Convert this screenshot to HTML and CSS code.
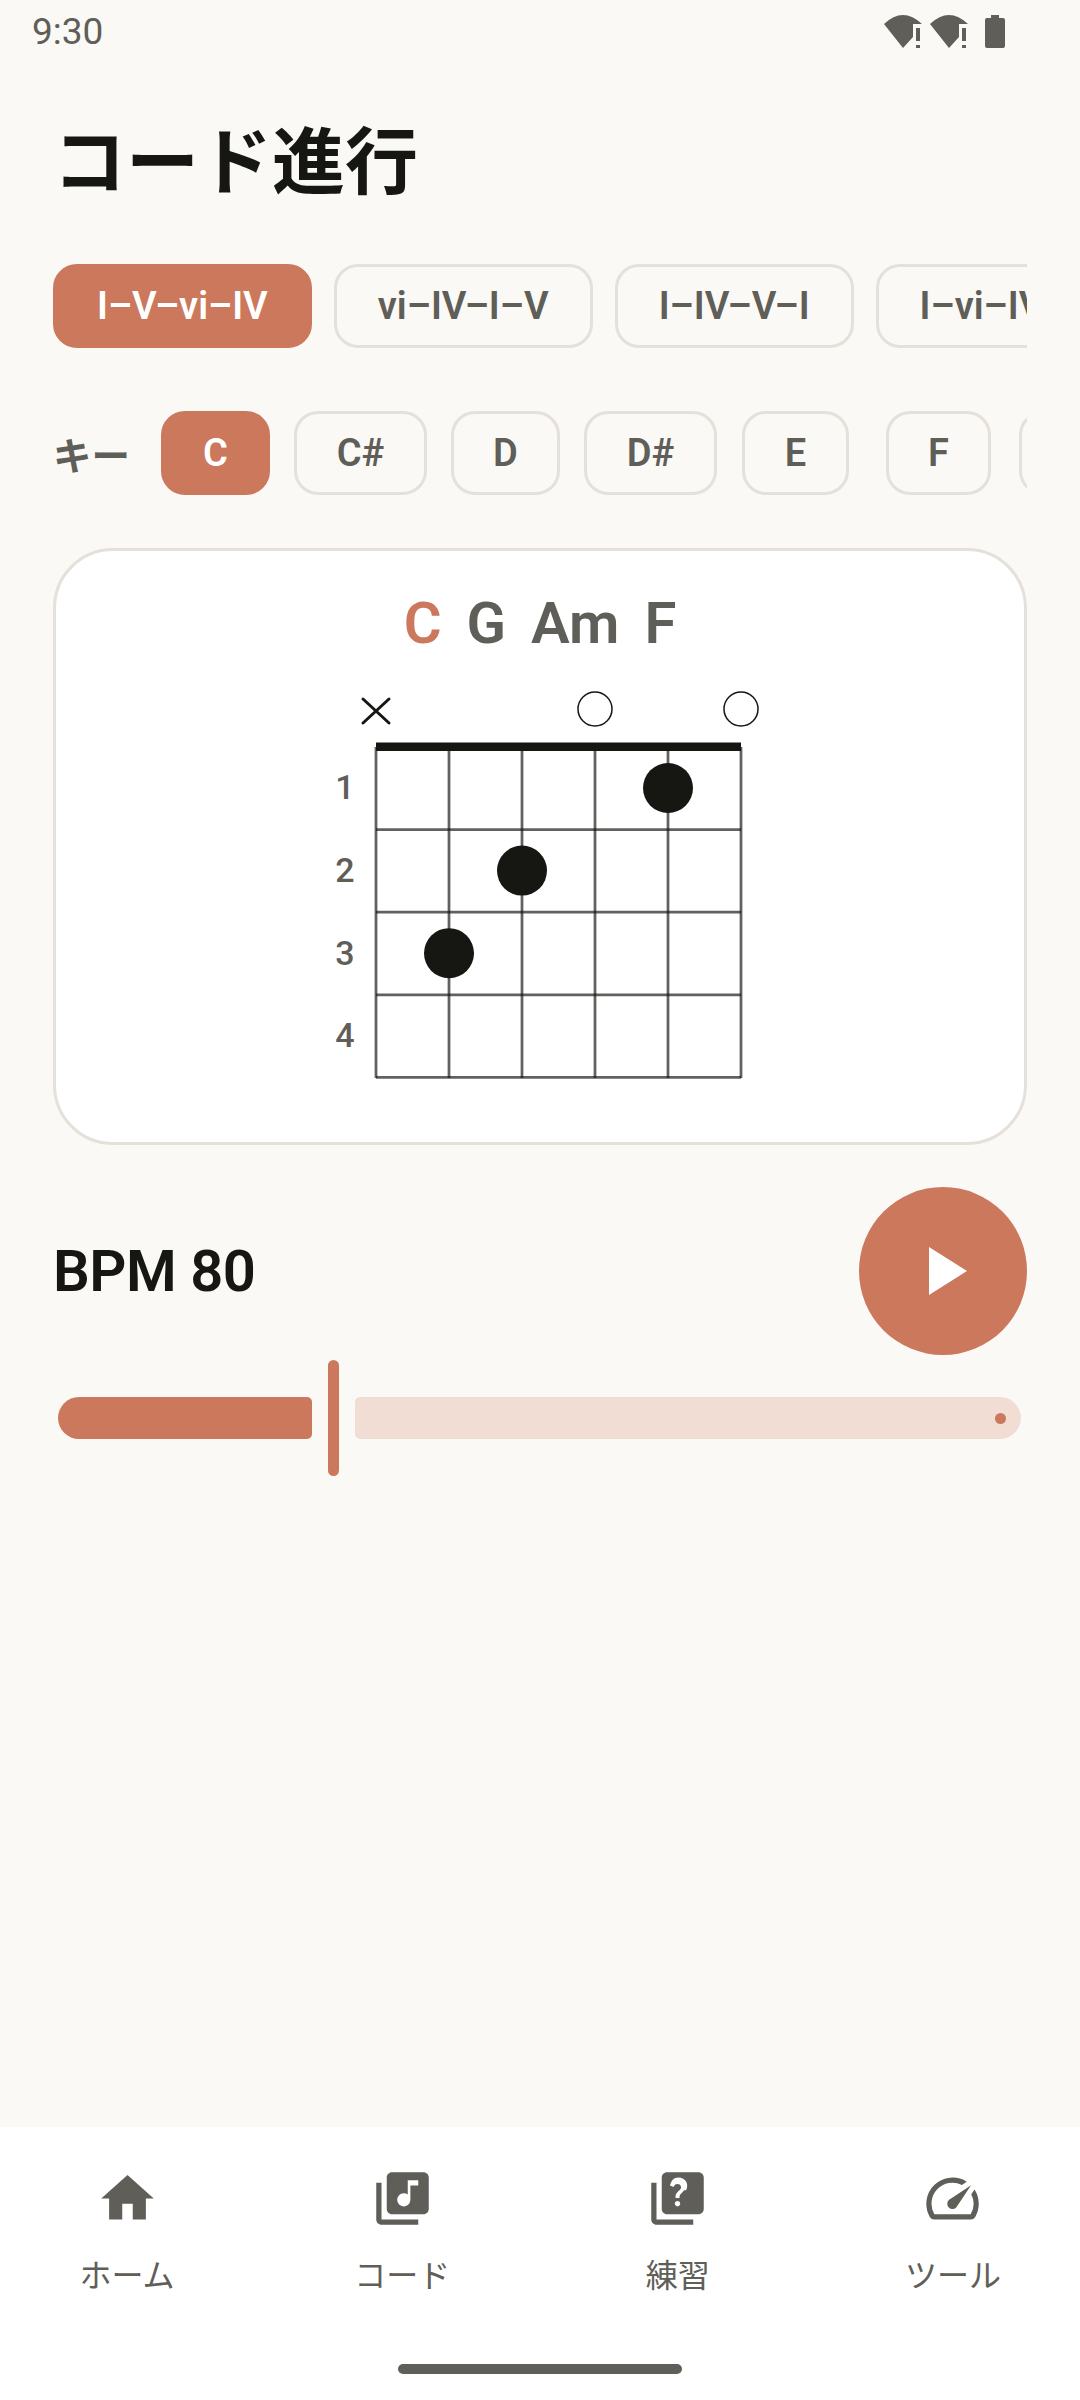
FILE: index.html
```html
<!DOCTYPE html>
<html lang="ja">

<head>
    <meta charset="UTF-8">
    <meta name="viewport" content="width=device-width, initial-scale=1.0">
    <title>コード進行</title>
    <link rel="stylesheet" href="styles.css">
</head>

<body>
    <div class="screen">
        <!-- status bar -->
        <div class="status">
            <span class="status-time">9:30</span>
            <div class="status-icons">
                <svg class="wifi" viewBox="0 0 38 33">
                    <path d="M0 9Q19 -9 38 9H29V22L19 33z" />
                    <path d="M32 13h4v13h-4zM32 30h4v3h-4z" />
                </svg>
                <svg class="wifi" viewBox="0 0 38 33">
                    <path d="M0 9Q19 -9 38 9H29V22L19 33z" />
                    <path d="M32 13h4v13h-4zM32 30h4v3h-4z" />
                </svg>
                <svg class="battery" viewBox="0 0 20 33">
                    <path d="M6 0h8v3h4q2 0 2 2v26q0 2-2 2H2q-2 0-2-2V5q0-2 2-2h4z" />
                </svg>
            </div>
        </div>

        <div class="main">
            <h1 class="title">コード進行</h1>

            <!-- progressions -->
            <div class="prog-list">
                <div class="chip active">I–V–vi–IV</div>
                <div class="chip">vi–IV–I–V</div>
                <div class="chip">I–IV–V–I</div>
                <div class="chip">I–vi–IV–V</div>
            </div>

            <!-- key -->
            <div class="key-row">
                <span class="key-label">キー</span>
                <div class="key-list">
                    <div class="key-slot"><div class="chip key active">C</div></div>
                    <div class="key-slot"><div class="chip key">C#</div></div>
                    <div class="key-slot"><div class="chip key">D</div></div>
                    <div class="key-slot"><div class="chip key">D#</div></div>
                    <div class="key-slot"><div class="chip key">E</div></div>
                    <div class="key-slot tight"><div class="chip key">F</div></div>
                    <div class="key-slot"><div class="chip key">F#</div></div>
                </div>
            </div>

            <!-- chord card -->
            <div class="card">
                <div class="chords">
                    <span class="now">C</span>
                    <span>G</span>
                    <span>Am</span>
                    <span>F</span>
                </div>
                <svg class="diagram" viewBox="0 0 440 402" width="440" height="402">
                    <path class="mute" d="M43 19L69 43M69 19L43 43" />
                    <circle class="open" cx="275" cy="29" r="17" />
                    <circle class="open" cx="421" cy="29" r="17" />
                    <path class="grid" d="M56 67V398M129 67V398M202 67V398M275 67V398M348 67V398M421 67V398" />
                    <path class="grid" d="M56 149.6H421M56 232.2H421M56 314.8H421M56 397.4H421" />
                    <rect class="nut" x="56" y="62.5" width="365" height="8.5" />
                    <circle class="dot" cx="348" cy="108" r="25" />
                    <circle class="dot" cx="202" cy="190.6" r="25" />
                    <circle class="dot" cx="129" cy="273.2" r="25" />
                    <text class="fret" x="25" y="119">1</text>
                    <text class="fret" x="25" y="202">2</text>
                    <text class="fret" x="25" y="284.6">3</text>
                    <text class="fret" x="25" y="367">4</text>
                </svg>
            </div>

            <!-- tempo -->
            <div class="bpm-row">
                <span class="bpm">BPM 80</span>
                <div class="play">
                    <svg viewBox="0 0 38 48" width="38" height="48">
                        <path d="M0 0L38 24L0 48z" />
                    </svg>
                </div>
            </div>
            <div class="slider">
                <div class="track-on"></div>
                <div class="handle"></div>
                <div class="track-off"><span class="stop"></span></div>
            </div>
        </div>

        <!-- bottom nav -->
        <div class="nav">
            <div class="nav-items">
                <div class="nav-item">
                    <svg viewBox="0 0 24 24"><path d="M10 20v-6h4v6h5v-8h3L12 3 2 12h3v8z" /></svg>
                    <span>ホーム</span>
                </div>
                <div class="nav-item">
                    <svg viewBox="0 0 24 24"><path d="M20 2H8c-1.1 0-2 .9-2 2v12c0 1.1.9 2 2 2h12c1.1 0 2-.9 2-2V4c0-1.1-.9-2-2-2zm-2 5h-3v5.5c0 1.38-1.12 2.5-2.5 2.5S10 13.88 10 12.5s1.12-2.5 2.5-2.5c.57 0 1.08.19 1.5.51V5h4v2zM4 6H2v14c0 1.1.9 2 2 2h14v-2H4V6z" /></svg>
                    <span>コード</span>
                </div>
                <div class="nav-item">
                    <svg viewBox="0 0 24 24"><path d="M4 6H2v14c0 1.1.9 2 2 2h14v-2H4V6zm16-4H8c-1.1 0-2 .9-2 2v12c0 1.1.9 2 2 2h12c1.1 0 2-.9 2-2V4c0-1.1-.9-2-2-2zm-7.99 13c-.59 0-1.05-.47-1.05-1.05 0-.59.47-1.04 1.05-1.04.59 0 1.04.45 1.04 1.04 0 .58-.45 1.05-1.04 1.05zm2.5-6.17c-.63.93-1.23 1.21-1.56 1.81-.13.24-.18.4-.18 1.18h-1.52c0-.41-.06-1.08.26-1.65.41-.73 1.18-1.16 1.63-1.8.48-.68.21-1.94-1.14-1.94-.88 0-1.32.67-1.5 1.23l-1.37-.57C9.51 5.33 10.59 4 12.32 4c1.45 0 2.44.66 2.94 1.49.43.7.68 2.05 0 3.34z" /></svg>
                    <span>練習</span>
                </div>
                <div class="nav-item">
                    <svg viewBox="0 0 24 24"><path d="M20.38 8.57l-1.23 1.85a8 8 0 0 1-.22 7.58H5.07A8 8 0 0 1 15.58 6.85l1.85-1.23A10 10 0 0 0 3.35 19a2 2 0 0 0 1.72 1h13.85a2 2 0 0 0 1.74-1 10 10 0 0 0-.27-10.44zm-9.79 6.84a2 2 0 0 0 2.83 0l5.66-8.49-8.49 5.66a2 2 0 0 0 0 2.83z" /></svg>
                    <span>ツール</span>
                </div>
            </div>
            <div class="pill"></div>
        </div>
    </div>
</body>

</html>
```

FILE: styles.css
```css
* {
    margin: 0;
    padding: 0;
    box-sizing: border-box;
}

body {
    background-color: #fbf9f5;
    font-family: Roboto, "Noto Sans CJK JP", sans-serif;
    color: #5f5e58;
}

.screen {
    width: 1080px;
    height: 2400px;
    display: flex;
    flex-direction: column;
    overflow: hidden;
}

/* status bar */
.status {
    height: 60px;
    flex: none;
    display: flex;
    justify-content: space-between;
    padding: 15px 75px 0 32px;
}

.status-time {
    font-size: 37px;
    line-height: 33px;
}

.status-icons {
    display: flex;
    gap: 8px;
}

.status-icons svg {
    height: 33px;
    fill: #5f5e58;
}

.wifi {
    width: 38px;
}

.battery {
    width: 20px;
    margin-left: 9px;
}

/* main column */
.main {
    flex: 1;
    padding: 0 53px;
}

.title {
    font-size: 73px;
    font-weight: 700;
    line-height: 100px;
    color: #161613;
    margin: 53px 0 0 0;
}

.prog-list {
    display: flex;
    gap: 22px;
    margin-top: 51px;
    overflow: hidden;
}

.chip {
    flex: none;
    height: 84px;
    padding: 0 41px;
    border: 3px solid #e5e0da;
    border-radius: 24px;
    display: flex;
    align-items: center;
    font-size: 38px;
    font-weight: 600;
}

.chip.active {
    background-color: #cb785c;
    border-color: #cb785c;
    color: #ffffff;
}

.key-row {
    display: flex;
    align-items: center;
    margin-top: 63px;
}

.key-label {
    flex: none;
    width: 90px;
    font-size: 38.5px;
    font-weight: 700;
}

.key-list {
    display: flex;
    overflow: hidden;
    flex: 1;
}

.key-slot {
    flex: none;
    width: 145px;
    display: flex;
    justify-content: center;
}

.key-slot.tight {
    margin-left: -2px;
}

.chip.key {
    padding: 0 39.5px;
}

/* chord card */
.card {
    height: 597px;
    margin-top: 53px;
    background-color: #ffffff;
    border: 3px solid #e5e0da;
    border-radius: 60px;
    display: flex;
    flex-direction: column;
    align-items: center;
}

.chords {
    display: flex;
    gap: 25px;
    margin-top: 38px;
    font-size: 58px;
    font-weight: 600;
    line-height: 68px;
}

.chords .now {
    color: #cb785c;
}

.diagram {
    margin-top: 23px;
}

.mute {
    fill: none;
    stroke: #161613;
    stroke-width: 3;
    stroke-linecap: round;
}

.open {
    fill: none;
    stroke: #161613;
    stroke-width: 1.5;
}

/* see-through, so crossings come out darker */
.grid {
    fill: none;
    stroke: #161613;
    stroke-opacity: 0.68;
    stroke-width: 2.75;
}

.nut,
.dot {
    fill: #161613;
}

.fret {
    font-size: 34px;
    font-weight: 500;
    fill: #5f5e58;
    text-anchor: middle;
}

/* tempo */
.bpm-row {
    display: flex;
    justify-content: space-between;
    align-items: center;
    margin-top: 42px;
}

.bpm {
    font-size: 58px;
    font-weight: 600;
    color: #161613;
    letter-spacing: -0.5px;
}

.play {
    width: 168px;
    height: 168px;
    border-radius: 50%;
    background-color: #cb785c;
    display: flex;
    align-items: center;
    justify-content: center;
}

.play svg {
    fill: #ffffff;
    margin-left: 10px;
}

.slider {
    display: flex;
    align-items: center;
    gap: 16px;
    height: 116px;
    margin-top: 5px;
    padding: 0 6px 0 5px;
}

.track-on {
    width: 254px;
    height: 42px;
    background-color: #cb785c;
    border-radius: 21px 5px 5px 21px;
}

.handle {
    width: 11px;
    height: 116px;
    background-color: #cb785c;
    border-radius: 6px;
}

.track-off {
    flex: 1;
    height: 42px;
    background-color: #f2ddd5;
    border-radius: 5px 21px 21px 5px;
    position: relative;
}

.stop {
    position: absolute;
    right: 15px;
    top: 16px;
    width: 11px;
    height: 11px;
    border-radius: 50%;
    background-color: #cb785c;
}

/* bottom nav */
.nav {
    flex: none;
    height: 273px;
    background-color: #ffffff;
    display: flex;
    flex-direction: column;
    align-items: center;
}

.nav-items {
    width: 100%;
    display: flex;
    justify-content: space-between;
    padding: 40px 77px 0;
}

.nav-item {
    width: 100px;
    display: flex;
    flex-direction: column;
    align-items: center;
    white-space: nowrap;
    font-size: 32px;
    line-height: 46px;
}

.nav-item svg {
    width: 63px;
    height: 63px;
    fill: #5f5e58;
    margin-bottom: 23px;
}

.pill {
    width: 284px;
    height: 10px;
    border-radius: 5px;
    background-color: #5f5e58;
    margin-top: 65px;
}
```
